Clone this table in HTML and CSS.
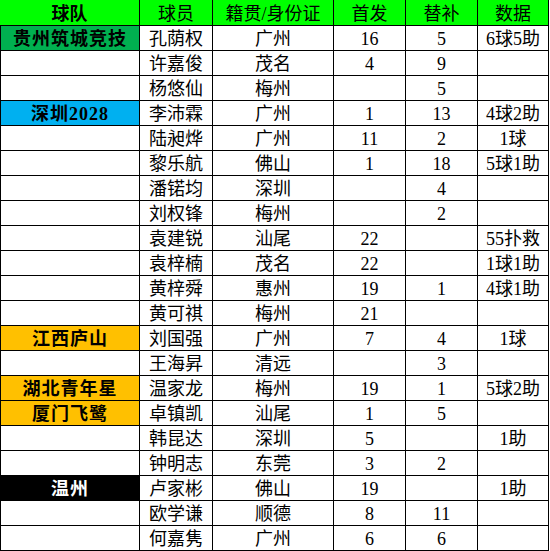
FILE: index.html
```html
<!DOCTYPE html>
<html lang="zh">
<head>
<meta charset="utf-8">
<title>球队数据</title>
<link rel="stylesheet" href="styles.css">
</head>
<body>
<div class="sheet">
  <div class="c hd team">球队</div><div class="c hd">球员</div><div class="c hd">籍贯/身份证</div><div class="c hd">首发</div><div class="c hd">替补</div><div class="c hd">数据</div>

  <div class="c team t-green">贵州筑城竞技</div><div class="c">孔荫权</div><div class="c">广州</div><div class="c">16</div><div class="c">5</div><div class="c">6球5助</div>
  <div class="c team"></div><div class="c">许嘉俊</div><div class="c">茂名</div><div class="c">4</div><div class="c">9</div><div class="c"></div>
  <div class="c team"></div><div class="c">杨悠仙</div><div class="c">梅州</div><div class="c"></div><div class="c">5</div><div class="c"></div>
  <div class="c team t-blue">深圳2028</div><div class="c">李沛霖</div><div class="c">广州</div><div class="c">1</div><div class="c">13</div><div class="c">4球2助</div>
  <div class="c team"></div><div class="c">陆昶烨</div><div class="c">广州</div><div class="c">11</div><div class="c">2</div><div class="c">1球</div>
  <div class="c team"></div><div class="c">黎乐航</div><div class="c">佛山</div><div class="c">1</div><div class="c">18</div><div class="c">5球1助</div>
  <div class="c team"></div><div class="c">潘锘均</div><div class="c">深圳</div><div class="c"></div><div class="c">4</div><div class="c"></div>
  <div class="c team"></div><div class="c">刘权锋</div><div class="c">梅州</div><div class="c"></div><div class="c">2</div><div class="c"></div>
  <div class="c team"></div><div class="c">袁建锐</div><div class="c">汕尾</div><div class="c">22</div><div class="c"></div><div class="c">55扑救</div>
  <div class="c team"></div><div class="c">袁梓楠</div><div class="c">茂名</div><div class="c">22</div><div class="c"></div><div class="c">1球1助</div>
  <div class="c team"></div><div class="c">黄梓舜</div><div class="c">惠州</div><div class="c">19</div><div class="c">1</div><div class="c">4球1助</div>
  <div class="c team"></div><div class="c">黄可祺</div><div class="c">梅州</div><div class="c">21</div><div class="c"></div><div class="c"></div>
  <div class="c team t-amber">江西庐山</div><div class="c">刘国强</div><div class="c">广州</div><div class="c">7</div><div class="c">4</div><div class="c">1球</div>
  <div class="c team"></div><div class="c">王海昇</div><div class="c">清远</div><div class="c"></div><div class="c">3</div><div class="c"></div>
  <div class="c team t-amber">湖北青年星</div><div class="c">温家龙</div><div class="c">梅州</div><div class="c">19</div><div class="c">1</div><div class="c">5球2助</div>
  <div class="c team t-amber">厦门飞鹭</div><div class="c">卓镇凯</div><div class="c">汕尾</div><div class="c">1</div><div class="c">5</div><div class="c"></div>
  <div class="c team"></div><div class="c">韩昆达</div><div class="c">深圳</div><div class="c">5</div><div class="c"></div><div class="c">1助</div>
  <div class="c team"></div><div class="c">钟明志</div><div class="c">东莞</div><div class="c">3</div><div class="c">2</div><div class="c"></div>
  <div class="c team t-black">温州</div><div class="c">卢家彬</div><div class="c">佛山</div><div class="c">19</div><div class="c"></div><div class="c">1助</div>
  <div class="c team"></div><div class="c">欧学谦</div><div class="c">顺德</div><div class="c">8</div><div class="c">11</div><div class="c"></div>
  <div class="c team"></div><div class="c">何嘉隽</div><div class="c">广州</div><div class="c">6</div><div class="c">6</div><div class="c"></div>
</div>
</body>
</html>
```

FILE: styles.css
```css
html, body {
  margin: 0;
  padding: 0;
  background: #ffffff;
}

.sheet {
  display: grid;
  grid-template-columns: 140px 73px 121px 72px 72px 71px;
  grid-template-rows: 26px;
  grid-auto-rows: 25px;
  width: 549px;
  font-family: "Liberation Serif", "Noto Sans CJK SC", serif;
  font-size: 18px;
  color: #000;
}

.c {
  box-sizing: border-box;
  border-right: 1px solid #000;
  border-bottom: 1px solid #000;
  display: flex;
  align-items: center;
  justify-content: center;
  padding-top: 2px;
  line-height: 1;
  white-space: nowrap;
  overflow: hidden;
}

.team {
  border-left: 1px solid #000;
  font-weight: bold;
  letter-spacing: 1px;
}

.hd {
  background: #00ff00;
}

.hd.team {
  border-left: none;
  letter-spacing: 0;
}

.t-green { background: #00b050; }
.t-blue { background: #00b0f0; }
.t-amber { background: #ffc000; }
.t-black { background: #000; color: #fff; }
```
